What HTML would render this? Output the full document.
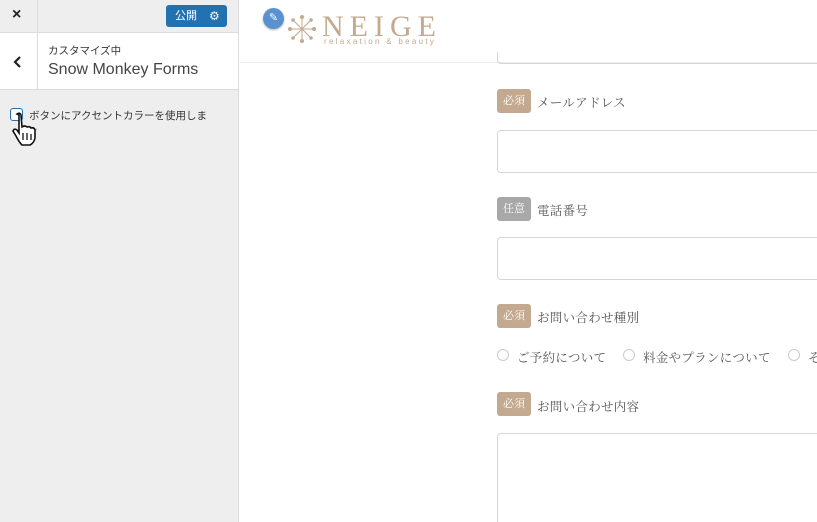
<!DOCTYPE html>
<html style="overflow:hidden;width:817px;height:522px"><head><meta charset="utf-8"><style>
*{margin:0;padding:0;box-sizing:border-box}
body{width:817px;height:522px;overflow:hidden;background:#fff;position:relative;font-family:"Liberation Sans","Noto Sans CJK JP",sans-serif}
.a{position:absolute}
.serif{font-family:"Liberation Serif","Noto Serif CJK SC",serif;color:#555}
.badge{position:absolute;left:497px;width:34px;height:24px;border-radius:3px;color:#fff;font-size:11px;text-align:center;line-height:24px;font-family:"Liberation Serif","Noto Serif CJK SC",serif}
.lbl{position:absolute;left:537px;font-size:12.5px;letter-spacing:0.3px}
.inp{position:absolute;left:497px;width:330px;height:43px;border:1px solid #d6d6d6;border-radius:4px}
.rad{position:absolute;top:349px;width:12px;height:12px;border:1px solid #ccc;border-radius:50%}
</style></head><body>
<div class="a" style="left:0;top:0;width:239px;height:522px;background:#eeeeee;border-right:1px solid #dcdcde"></div>
<div class="a" style="left:0;top:32px;width:239px;height:1px;background:#dcdcde"></div>
<div class="a" style="left:37px;top:0;width:1px;height:32px;background:#dcdcde"></div>
<div class="a" style="left:12px;top:6px;font-size:16px;font-weight:bold;color:#222">×</div>
<div class="a" style="left:166px;top:5px;width:61px;height:22px;background:#2271b1;border-radius:3px;color:#fff;font-size:11px;line-height:22px;padding-left:9px">公開<span style="position:absolute;left:43px;font-size:12px">⚙</span></div>
<div class="a" style="left:0;top:33px;width:238px;height:57px;background:#fff;border-bottom:1px solid #dcdcde"></div>
<div class="a" style="left:37px;top:33px;width:1px;height:57px;background:#dcdcde"></div>
<svg class="a" style="left:13px;top:55px" width="10" height="14"><path d="M7 2 L2 7 L7 12" stroke="#222" stroke-width="2.2" fill="none"/></svg>
<div class="a" style="left:48px;top:43px;font-size:10.5px;color:#333">カスタマイズ中</div>
<div class="a" style="left:48px;top:61px;font-size:16px;color:#444">Snow Monkey Forms</div>
<div class="a" style="left:10px;top:108px;width:13px;height:13px;border:1.5px solid #2271b1;border-radius:3px;background:#fff"></div>
<div class="a" style="left:29px;top:108px;font-size:10.5px;color:#333">ボタンにアクセントカラーを使用しま</div>
<div class="a" style="left:29px;top:125px;font-size:9px;color:#888">す</div>
<svg class="a" style="left:9px;top:111px" width="30" height="36"><path d="M8 3 q3-2 4 1 l1 12 q3-2 5 0 q3-1 4 1 q3-1 4 2 l0 8 q-1 5-5 7 l-8 0 q-3-3-6-9 l-3-5 q1-3 4-1 l2 3 l0-18z" fill="#fff" stroke="#111" stroke-width="1.6"/><path d="M14 22v7M18 22v7M22 23v6" stroke="#111" stroke-width="1.3"/></svg>
<div class="a" style="left:240px;top:62px;width:577px;height:1px;background:#eee"></div>
<div class="a" style="left:263px;top:8px;width:21px;height:21px;border-radius:50%;background:#5a92d0;box-shadow:0 1px 2px rgba(0,0,0,.3);color:#fff;font-size:11px;text-align:center;line-height:21px">✎</div>
<svg class="a" style="left:287px;top:14px" width="30" height="30"><g stroke="#c2a98f" stroke-width="1" fill="#c2a98f"><path d="M15 3v24M3 15h24M6 6l18 18M24 6L6 24"/><circle cx="15" cy="3" r="1.5"/><circle cx="15" cy="27" r="1.5"/><circle cx="3" cy="15" r="1.5"/><circle cx="27" cy="15" r="1.5"/><circle cx="6" cy="6" r="1.3"/><circle cx="24" cy="24" r="1.3"/><circle cx="24" cy="6" r="1.3"/><circle cx="6" cy="24" r="1.3"/></g></svg>
<div class="a" style="left:322px;top:10px;font-family:'Liberation Serif',serif;font-size:30px;letter-spacing:6px;color:#c2a98f">NEIGE</div>
<div class="a" style="left:324px;top:37px;font-size:8px;letter-spacing:2.3px;color:#c2a98f">relaxation &amp; beauty</div>
<div class="a" style="left:497px;top:52px;width:330px;height:12px;border:1px solid #d6d6d6;border-top:none;border-radius:0 0 4px 4px"></div>
<div class="badge" style="top:89px;background:#c2a98f">必須</div><div class="lbl serif" style="top:93px">メールアドレス</div>
<div class="inp" style="top:130px"></div>
<div class="badge" style="top:197px;background:#a8a8a8">任意</div><div class="lbl serif" style="top:201px">電話番号</div>
<div class="inp" style="top:237px"></div>
<div class="badge" style="top:304px;background:#c2a98f">必須</div><div class="lbl serif" style="top:308px">お問い合わせ種別</div>
<div class="rad" style="left:497px"></div><div class="a serif" style="left:517px;top:348px;font-size:12.5px;letter-spacing:0.3px">ご予約について</div>
<div class="rad" style="left:623px"></div><div class="a serif" style="left:643px;top:348px;font-size:12.5px;letter-spacing:0.3px">料金やプランについて</div>
<div class="rad" style="left:788px"></div><div class="a serif" style="left:808px;top:348px;font-size:12.5px">そ</div>
<div class="badge" style="top:392px;background:#c2a98f">必須</div><div class="lbl serif" style="top:397px">お問い合わせ内容</div>
<div class="inp" style="top:433px;height:89px;border-bottom:none;border-radius:4px 4px 0 0"></div>
</body></html>
